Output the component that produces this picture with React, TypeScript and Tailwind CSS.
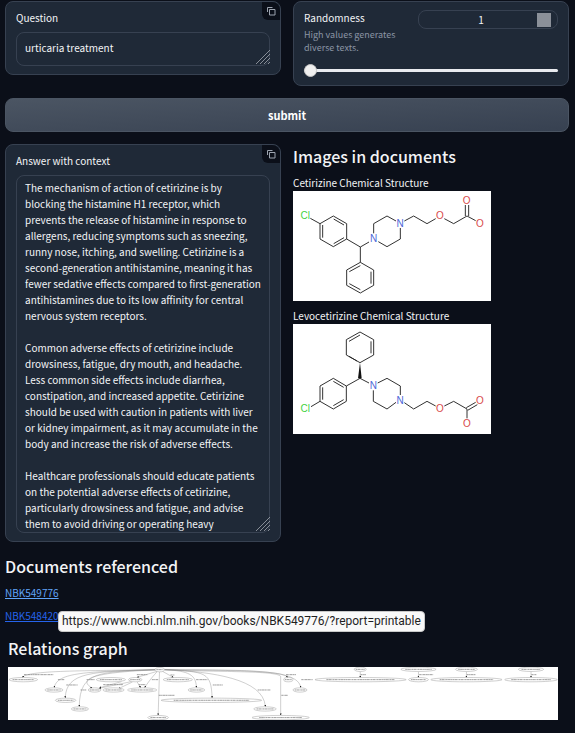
import type { ReactNode } from "react";

const ANSWER = `The mechanism of action of cetirizine is by blocking the histamine H1 receptor, which prevents the release of histamine in response to allergens, reducing symptoms such as sneezing, runny nose, itching, and swelling. Cetirizine is a second-generation antihistamine, meaning it has fewer sedative effects compared to first-generation antihistamines due to its low affinity for central nervous system receptors.

Common adverse effects of cetirizine include drowsiness, fatigue, dry mouth, and headache. Less common side effects include diarrhea, constipation, and increased appetite. Cetirizine should be used with caution in patients with liver or kidney impairment, as it may accumulate in the body and increase the risk of adverse effects.

Healthcare professionals should educate patients on the potential adverse effects of cetirizine, particularly drowsiness and fatigue, and advise them to avoid driving or operating heavy`;

function Panel({ children }: { children: ReactNode }) {
  return (
    <section className="relative min-w-0 rounded-lg border border-[#374151] bg-[#1f2937] px-2.5 pt-2 pb-2">
      {children}
    </section>
  );
}

function CopyButton() {
  return (
    <button
      type="button"
      aria-label="Copy"
      className="absolute top-0 right-0 flex h-[18px] w-[18px] items-center justify-center rounded-tr-lg rounded-bl-md bg-[#0b0f19] text-[#9ca3af]"
    >
      <svg viewBox="0 0 10 10" className="h-2.5 w-2.5" fill="none" stroke="currentColor">
        <path d="M3.5 3.5H9V9H3.5Z" />
        <path d="M1.5 6V1.5H6.5" />
      </svg>
    </button>
  );
}

function Grip() {
  return (
    <svg
      viewBox="0 0 14 14"
      className="pointer-events-none absolute right-0 bottom-0.5 h-3.5 w-3.5"
      stroke="#a3a8b0"
      strokeWidth="0.8"
    >
      <path d="M0 14L14 0M4 14L14 4M8 14L14 8M12 14L14 12" />
    </svg>
  );
}

function Atom({ x, y, color, children }: { x: number; y: number; color: string; children: string }) {
  return (
    <text x={x} y={y} fill={color} textAnchor="middle" dominantBaseline="central" fontSize="30" className="font-['Liberation_Sans',sans-serif]">
      {children}
    </text>
  );
}

const RED = "#d84a4a";
const BLUE = "#4d68d8";
const GREEN = "#3fd23f";

function Cetirizine() {
  return (
    <svg role="img" aria-label="Cetirizine" viewBox="24 153 594 330" className="block w-full bg-white">
      <g fill="none" stroke="#222" strokeWidth="2.8">
        <path d="M76 235L105 251M105 251L145 228L185 251V297L145 320L105 297ZM113 255V293M146 237L177 255M146 311L177 293" />
        <path d="M185 297L226 321L252 306M226 321V367" />
        <path d="M226 367L266 390V436L226 459L185 436V390ZM226 377L193 395M258 395V431M226 449L193 431" />
        <path d="M266 280V251L306 228L333 243M346 264V297L306 320L280 305" />
        <path d="M358 243L386 228L426 251L452 236M478 236L506 251L546 228L572 242M541 228V195M551 228V195" />
      </g>
      <Atom x={61} y={226} color={GREEN}>Cl</Atom>
      <Atom x={266} y={295} color={BLUE}>N</Atom>
      <Atom x={345} y={249} color={BLUE}>N</Atom>
      <Atom x={465} y={226} color={RED}>O</Atom>
      <Atom x={545} y={180} color={RED}>O</Atom>
      <Atom x={585} y={250} color={RED}>O</Atom>
    </svg>
  );
}

function Levocetirizine() {
  return (
    <svg role="img" aria-label="Levocetirizine" viewBox="24 72 594 330" className="block w-full bg-white">
      <g fill="none" stroke="#222" strokeWidth="2.8">
        <path d="M78 320L105 304M105 304V258L145 235L184 258V304L145 327L105 304M113 299V262M145 244L176 262M145 317L176 299" />
        <path d="M184 258L225 235L252 249" />
        <path d="M225 188L184 165V119L225 96L266 119V165ZM216 183L192 169M192 124L225 105M258 124V160" />
        <path d="M278 249L306 235L346 258V285M333 307L306 327L265 304V271" />
        <path d="M358 308L386 327L426 304L452 318M478 318L506 304L546 327V355M544 323L572 307M548 331L577 314" />
      </g>
      <path d="M225 188L219 235H230Z" fill="#111" />
      <Atom x={61} y={325} color={GREEN}>Cl</Atom>
      <Atom x={265} y={255} color={BLUE}>N</Atom>
      <Atom x={345} y={301} color={BLUE}>N</Atom>
      <Atom x={465} y={325} color={RED}>O</Atom>
      <Atom x={585} y={301} color={RED}>O</Atom>
      <Atom x={546} y={370} color={RED}>O</Atom>
    </svg>
  );
}

// Each node: centre x, centre y, horizontal radius.
const NODES: [number, number, number][] = [
  [480, 22, 14], [70, 52, 43], [162, 83, 27], [197, 114, 31], [240, 140, 26],
  [333, 52, 44], [284, 83, 19], [341, 83, 32], [406, 52, 20], [427, 83, 44],
  [475, 166, 31], [534, 52, 44], [590, 83, 25], [635, 114, 151], [796, 140, 34],
  [843, 166, 86], [866, 52, 14], [901, 83, 21], [1082, 21, 18], [1083, 52, 137],
  [1257, 21, 53], [1257, 52, 30], [1401, 21, 33], [1401, 52, 107], [1595, 21, 38],
  [1595, 52, 79],
];

const EDGES = [
  "M466 22C300 26 80 22 68 45", "M466 22C260 28 172 30 163 75", "M466 22C280 28 199 28 196 106",
  "M466 22C300 30 240 24 238 132", "M466 23C330 28 220 42 276 77", "M472 27L412 45",
  "M472 28C455 46 442 64 435 75", "M479 29L475 158", "M488 27L520 45",
  "M494 22C570 26 588 38 590 75", "M494 22C620 28 634 30 637 106", "M494 22C640 28 790 50 797 132",
  "M494 22C650 30 830 24 843 42V158", "M494 22C720 24 855 26 863 45", "M494 22C730 24 895 18 903 75",
  "M394 58L298 78", "M398 59L358 78", "M412 59L422 75", "M365 58L300 76", "M1082 28V45", "M1257 28V45", "M1401 28V45", "M1595 28V45",
];

// Each relation label: start x, centre y, length.
const LABELS: [number, number, number][] = [
  [72, 37, 88], [174, 52, 20], [199, 68, 34], [242, 83, 17], [260, 52, 24], [310, 67, 60],
  [411, 37, 32], [416, 67, 21], [456, 52, 20], [477, 99, 48], [512, 38, 12], [589, 52, 34],
  [639, 68, 30], [774, 83, 38], [845, 99, 20], [859, 37, 30], [905, 52, 34], [1083, 37, 16],
  [1259, 37, 42], [1402, 37, 26], [1596, 37, 15],
];

function RelationsGraph() {
  return (
    <svg role="img" aria-label="Relations between the documents" viewBox="24 14 1652 160" className="block w-full bg-white">
      <defs>
        <marker id="arrow" viewBox="0 0 8 8" refX="6" refY="4" markerWidth="6" markerHeight="6" markerUnits="userSpaceOnUse" orient="auto">
          <path d="M0 0L8 4L0 8Z" fill="#222" />
        </marker>
      </defs>
      <g fill="none" stroke="#888" strokeWidth="1.2">
        {EDGES.map((d) => <path key={d} d={d} markerEnd="url(#arrow)" />)}
      </g>
      {NODES.map(([x, y, r]) => (
        <g key={`${x}-${y}`}>
          <ellipse cx={x} cy={y} rx={r} ry="6.5" fill="#fff" stroke="#888" strokeWidth="1.2" />
          <path d={`M${x - r * 0.75} ${y}H${x + r * 0.75}`} stroke="#888" strokeWidth="2.4" strokeDasharray="5 1 8 1 3 1" />
        </g>
      ))}
      {LABELS.map(([x, y, w]) => (
        <path key={`${x}-${y}`} d={`M${x} ${y}h${w}`} stroke="#888" strokeWidth="2.4" strokeDasharray="6 1 3 1 8 1" />
      ))}
    </svg>
  );
}

export default function App() {
  return (
    <main className="min-h-screen bg-[#0b0f19] pt-px pr-1.5 pl-[5px] font-['Noto_Sans_CJK_SC','Noto_Sans',sans-serif] text-[10px] leading-4 text-[#f3f4f6]">
      <div className="grid grid-cols-2 items-start gap-x-3">
        <Panel>
          <label htmlFor="question" className="block">Question</label>
          <CopyButton />
          <div className="relative mt-1.5">
            <textarea id="question" rows={1} defaultValue="urticaria treatment" className="block h-[34px] w-full resize-none overflow-hidden rounded-lg border border-[#374151] bg-transparent px-2 py-[7px] outline-none" />
            <Grip />
          </div>
        </Panel>
        <Panel>
          <div className="flex justify-between">
            <div className="w-24">
              <label htmlFor="randomness" className="block">Randomness</label>
              <p id="randomness-info" className="mt-0.5 text-[9px] leading-[13px] text-[#8b95a5]">High values generates diverse texts.</p>
            </div>
            <div className="flex h-[19px] w-[140px] items-center rounded-lg border border-[#374151] pr-1.5">
              <input
                type="number"
                aria-label="Randomness value"
                defaultValue={1}
                className="min-w-0 flex-1 [appearance:textfield] bg-transparent pl-1.5 text-center outline-none [&::-webkit-inner-spin-button]:appearance-none"
              />
              <span className="h-3.5 w-3.5 bg-[#8b9099]" />
            </div>
          </div>
          <input
            id="randomness"
            type="range"
            min={1}
            max={100}
            defaultValue={1}
            aria-describedby="randomness-info"
            className="mt-2.5 block h-[13px] w-full appearance-none bg-transparent [&::-webkit-slider-runnable-track]:h-[3px] [&::-webkit-slider-runnable-track]:rounded-full [&::-webkit-slider-runnable-track]:bg-[#e9ebef] [&::-webkit-slider-thumb]:-mt-[5px] [&::-webkit-slider-thumb]:h-[13px] [&::-webkit-slider-thumb]:w-[13px] [&::-webkit-slider-thumb]:appearance-none [&::-webkit-slider-thumb]:rounded-full [&::-webkit-slider-thumb]:border [&::-webkit-slider-thumb]:border-[#c4c4c4] [&::-webkit-slider-thumb]:bg-[#efefef]"
          />
        </Panel>
      </div>

      <button type="button" className="mt-3 block h-[34px] w-full rounded-lg border border-[#4b5563] bg-linear-to-br from-[#4b5563] to-[#374151] text-[11px] font-bold text-white">
        submit
      </button>

      <div className="mt-3 grid grid-cols-2 items-start gap-x-3">
        <Panel>
          <label htmlFor="answer" className="block">Answer with context</label>
          <CopyButton />
          <div className="relative mt-1.5">
            <textarea id="answer" defaultValue={ANSWER} className="block h-[358px] w-full resize-none overflow-hidden rounded-lg border border-[#374151] bg-transparent px-2 py-1 outline-none" />
            <Grip />
          </div>
        </Panel>
        <div>
          <h2 className="text-base leading-6 font-medium">Images in documents</h2>
          <figure className="mt-[7px] w-[198px]">
            <figcaption>Cetirizine Chemical Structure</figcaption>
            <Cetirizine />
          </figure>
          <figure className="mt-[7px] w-[198px]">
            <figcaption>Levocetirizine Chemical Structure</figcaption>
            <Levocetirizine />
          </figure>
        </div>
      </div>

      <h2 className="mt-3 text-base leading-6 font-medium">Documents referenced</h2>
      <ul className="mt-[7px] flex flex-col items-start gap-[7px]">
        <li><a href="#NBK549776" className="text-[#60a5fa] underline">NBK549776</a></li>
        <li className="relative">
          <a href="#NBK548420" className="text-[#2563eb] underline">NBK548420</a>
          <div role="tooltip" className="absolute top-[3px] left-[53px] rounded-sm border border-[#c9c9c9] bg-[#f9f9f9] px-[3px] font-['Roboto',sans-serif] text-xs leading-[19px] whitespace-nowrap text-[#1f1f1f]">
            https://www.ncbi.nlm.nih.gov/books/NBK549776/?report=printable
          </div>
        </li>
      </ul>

      <section className="mt-3 pr-[11px] pl-[3px]">
        <h2 className="mb-[7px] text-base leading-6 font-medium">Relations graph</h2>
        <RelationsGraph />
      </section>
    </main>
  );
}
